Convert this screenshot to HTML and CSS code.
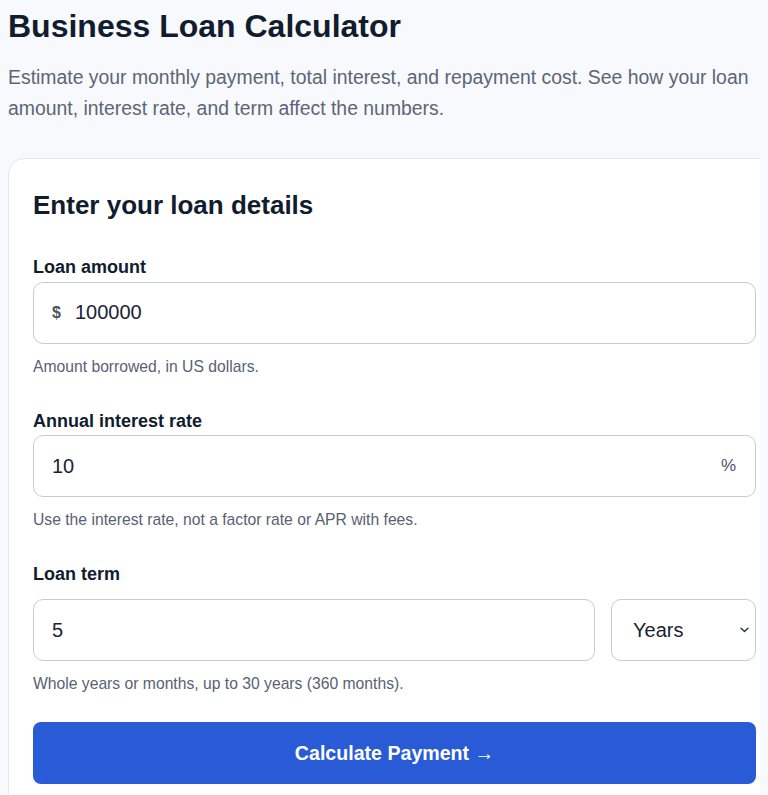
FILE: index.html
```html
<!DOCTYPE html>
<html lang="en">
<head>
  <meta charset="UTF-8">
  <meta name="viewport" content="width=device-width, initial-scale=1.0">
  <title>Business Loan Calculator</title>
  <link rel="stylesheet" href="styles.css">
</head>
<body>
  <main class="page">
    <h1 class="title">Business Loan Calculator</h1>
    <p class="intro">Estimate your monthly payment, total interest, and repayment cost. See how your loan amount, interest rate, and term affect the numbers.</p>

    <form class="card">
      <h2 class="card-title">Enter your loan details</h2>

      <div class="field">
        <label class="field-label" for="amount">Loan amount</label>
        <div class="input-box">
          <span class="prefix">$</span>
          <input id="amount" class="input" type="text" value="100000">
        </div>
        <p class="hint">Amount borrowed, in US dollars.</p>
      </div>

      <div class="field">
        <label class="field-label" for="rate">Annual interest rate</label>
        <div class="input-box">
          <input id="rate" class="input" type="text" value="10">
          <span class="suffix">%</span>
        </div>
        <p class="hint">Use the interest rate, not a factor rate or APR with fees.</p>
      </div>

      <div class="field field-term">
        <label class="field-label" for="term">Loan term</label>
        <div class="term-row">
          <div class="input-box">
            <input id="term" class="input" type="text" value="5">
          </div>
          <div class="select-wrap">
            <select class="unit" aria-label="Term unit">
              <option selected>Years</option>
              <option>Months</option>
            </select>
            <svg class="chevron" width="9" height="6" viewBox="0 0 9 6" aria-hidden="true">
              <path d="M1 1.2 L4.5 4.6 L8 1.2" fill="none" stroke="#2b3340" stroke-width="1.4" stroke-linecap="round" stroke-linejoin="round"/>
            </svg>
          </div>
        </div>
        <p class="hint">Whole years or months, up to 30 years (360 months).</p>
      </div>

      <button class="submit" type="button">Calculate Payment &rarr;</button>
    </form>
  </main>
</body>
</html>
```

FILE: styles.css
```css
html {
  overflow: hidden;
  scrollbar-width: none;
}

::-webkit-scrollbar {
  display: none;
}

body {
  margin: 8px;
  font-family: "Liberation Sans", Arial, sans-serif;
  background-color: #f7f9fc;
  color: #111c2e;
}

.page {
  width: 773px;
}

.title {
  margin: 0 0 17px;
  font-size: 32px;
  line-height: 1.15;
  font-weight: bold;
  color: #111c2e;
}

.intro {
  margin: 0 0 34px;
  font-size: 19.4px;
  line-height: 31px;
  color: #5b6676;
}

.card {
  box-sizing: border-box;
  width: 773px;
  padding: 31px 24px 24px;
  background-color: #fff;
  border: 1px solid #e3e7ee;
  border-radius: 16px;
}

.card-title {
  margin: 0 0 36px;
  font-size: 26px;
  line-height: 1.2;
  color: #111c2e;
}

.field {
  margin-bottom: 35px;
}

.field-label {
  display: block;
  margin-bottom: 4px;
  font-size: 18px;
  line-height: 1.15;
  font-weight: bold;
  color: #111c2e;
}

.field-term .field-label {
  margin-bottom: 14px;
}

.input-box {
  box-sizing: border-box;
  display: flex;
  align-items: center;
  gap: 14px;
  height: 62px;
  padding: 0 19px 0 18px;
  background-color: #fff;
  border: 1px solid #c7cbd2;
  border-radius: 10px;
}

.input {
  flex: 1;
  min-width: 0;
  padding: 0;
  border: none;
  outline: none;
  background: transparent;
  font-family: inherit;
  font-size: 20px;
  color: #1a2333;
}

.prefix {
  font-size: 16px;
  font-weight: bold;
  color: #4b5563;
}

.suffix {
  font-size: 17px;
  color: #4b5563;
}

.hint {
  margin: 14px 0 0;
  font-size: 15.7px;
  line-height: 1.15;
  color: #586273;
}

.term-row {
  display: grid;
  grid-template-columns: 1fr 145px;
  gap: 16px;
}

.select-wrap {
  position: relative;
}

.unit {
  box-sizing: border-box;
  width: 100%;
  height: 62px;
  padding: 0 28px 0 21px;
  appearance: none;
  -webkit-appearance: none;
  background-color: #fff;
  border: 1px solid #c7cbd2;
  border-radius: 10px;
  font-family: inherit;
  font-size: 20px;
  color: #1a2333;
}

.chevron {
  position: absolute;
  right: 7px;
  top: 28px;
  pointer-events: none;
}

.field:last-of-type {
  margin-bottom: 0;
}

.submit {
  display: block;
  width: 100%;
  height: 62px;
  margin-top: 29px;
  background-color: #2a5bd7;
  color: #fff;
  border: none;
  border-radius: 8px;
  font-family: inherit;
  font-size: 19.6px;
  font-weight: bold;
  cursor: pointer;
}
```
